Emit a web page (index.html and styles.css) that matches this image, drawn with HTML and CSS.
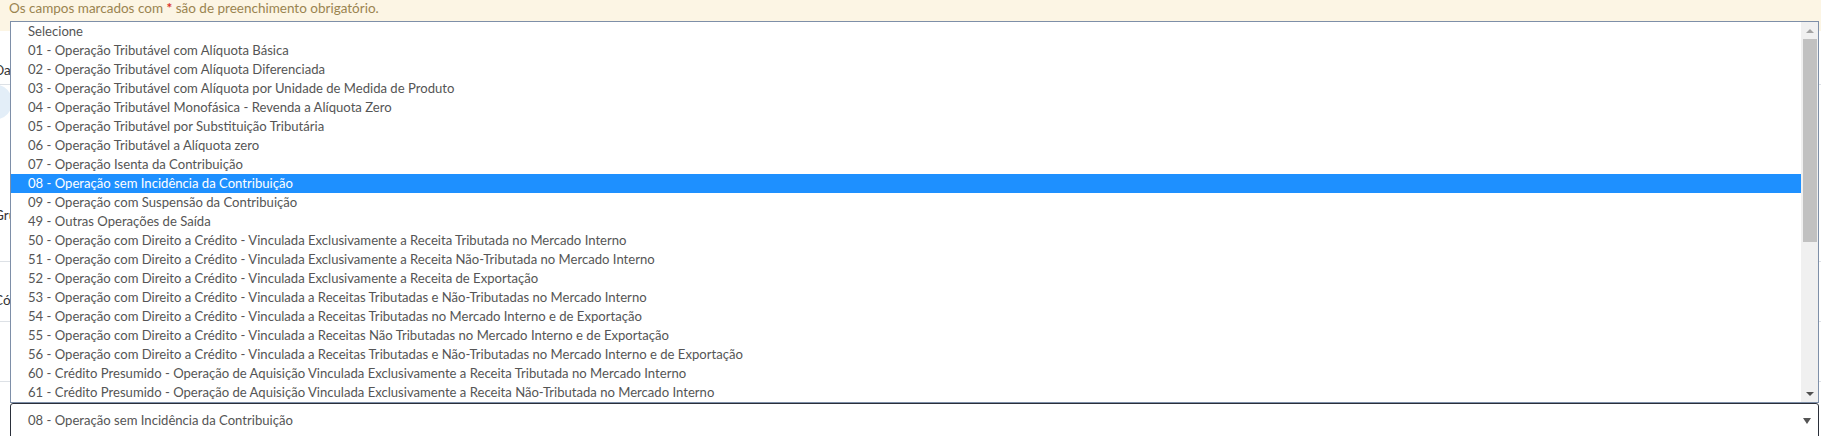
FILE: index.html
```html
<!DOCTYPE html>
<html lang="pt-BR">
<head>
<meta charset="utf-8">
<title>CST</title>
<link rel="stylesheet" href="styles.css">
</head>
<body>
<div class="page">
  <div class="notice">Os campos marcados com <span class="req">*</span> são de preenchimento obrigatório.</div>
  <div class="form">
    <div class="frow r1"><span class="lbl">Data de emissão</span></div>
    <div class="frow r2"><span class="blob"></span></div>
    <div class="frow r3"><span class="lbl">Grupo</span></div>
    <div class="frow r4"><span class="lbl">Código</span></div>
    <div class="frow r5"></div>
  </div>

  <div class="dropdown">
    <div class="listbox">
      <ul class="options">
        <li>Selecione</li>
        <li>01 - Operação Tributável com Alíquota Básica</li>
        <li>02 - Operação Tributável com Alíquota Diferenciada</li>
        <li>03 - Operação Tributável com Alíquota por Unidade de Medida de Produto</li>
        <li>04 - Operação Tributável Monofásica - Revenda a Alíquota Zero</li>
        <li>05 - Operação Tributável por Substituição Tributária</li>
        <li>06 - Operação Tributável a Alíquota zero</li>
        <li>07 - Operação Isenta da Contribuição</li>
        <li class="sel">08 - Operação sem Incidência da Contribuição</li>
        <li>09 - Operação com Suspensão da Contribuição</li>
        <li>49 - Outras Operações de Saída</li>
        <li>50 - Operação com Direito a Crédito - Vinculada Exclusivamente a Receita Tributada no Mercado Interno</li>
        <li>51 - Operação com Direito a Crédito - Vinculada Exclusivamente a Receita Não-Tributada no Mercado Interno</li>
        <li>52 - Operação com Direito a Crédito - Vinculada Exclusivamente a Receita de Exportação</li>
        <li>53 - Operação com Direito a Crédito - Vinculada a Receitas Tributadas e Não-Tributadas no Mercado Interno</li>
        <li>54 - Operação com Direito a Crédito - Vinculada a Receitas Tributadas no Mercado Interno e de Exportação</li>
        <li>55 - Operação com Direito a Crédito - Vinculada a Receitas Não Tributadas no Mercado Interno e de Exportação</li>
        <li>56 - Operação com Direito a Crédito - Vinculada a Receitas Tributadas e Não-Tributadas no Mercado Interno e de Exportação</li>
        <li>60 - Crédito Presumido - Operação de Aquisição Vinculada Exclusivamente a Receita Tributada no Mercado Interno</li>
        <li>61 - Crédito Presumido - Operação de Aquisição Vinculada Exclusivamente a Receita Não-Tributada no Mercado Interno</li>
      </ul>
      <div class="scrollbar">
        <span class="arrow up"></span>
        <span class="thumb"></span>
        <span class="track"></span>
        <span class="arrow down"></span>
      </div>
    </div>
    <div class="select">
      <span class="value">08 - Operação sem Incidência da Contribuição</span>
      <span class="caret"></span>
    </div>
  </div>
</div>
</body>
</html>
```

FILE: styles.css
```css
* { box-sizing: border-box; }
html, body { margin: 0; padding: 0; background: #fff; }
body {
  font-family: "Lato", "Liberation Sans", sans-serif;
  font-size: 13.1px;
  color: #555;
  width: 1821px;
  height: 436px;
  overflow: hidden;
}
.page { position: relative; width: 1821px; height: 436px; }

.notice {
  height: 31px;
  background: #fcf5e4;
  color: #9a8450;
  padding: 0 0 0 9px;
  line-height: 16px;
  font-size: 13.5px;
}
.notice .req { color: #d9322b; font-weight: bold; }

.form { display: flex; flex-direction: column; }
.frow { position: relative; border-bottom: 1px solid #dde1e6; color: #333; font-size: 13.5px; }
.frow .lbl { display: block; margin-left: -6px; }
.r1 { height: 54px; padding-top: 31px; }
.r2 { height: 58px; border-bottom: none; }
.r2 .blob { display: block; width: 30px; height: 34px; margin: 0 0 0 -18px; background: #e3eef8; border-radius: 50%; }
.r3 { height: 119px; padding-top: 64px; }
.r4 { height: 60px; padding-top: 30px; }
.r5 { height: 60px; }

.dropdown {
  position: absolute;
  left: 10px;
  top: 21px;
  width: 1809px;
}
.listbox {
  display: flex;
  height: 382px;
  border: 1px solid #7e8fa8;
  background: #fff;
}
.options {
  flex: 1;
  list-style: none;
  margin: 0;
  padding: 0;
}
.options li {
  height: 19px;
  line-height: 19px;
  padding-left: 17px;
  white-space: nowrap;
  color: #555;
}
.options li.sel { background: #1e90ff; color: #fff; }

.scrollbar {
  width: 17px;
  display: flex;
  flex-direction: column;
  align-items: center;
  background: #f0f0f0;
  padding: 0 1px 0 1px;
}
.scrollbar .arrow { width: 100%; height: 17px; display: flex; align-items: center; justify-content: center; }
.scrollbar .arrow::before { content: ""; border-left: 4px solid transparent; border-right: 4px solid transparent; }
.scrollbar .up::before { border-bottom: 4px solid #a3a3a3; }
.scrollbar .down::before { border-top: 4px solid #505050; }
.scrollbar .thumb { width: 14px; height: 203px; background: #c1c1c1; }
.scrollbar .track { flex: 1; }

.select {
  display: flex;
  align-items: center;
  justify-content: space-between;
  height: 36px;
  border: 1px solid #2a2f3a;
  border-radius: 3px;
  background: #fff;
  padding: 0 7px 2px 17px;
  color: #555;
}
.select .caret { width: 0; height: 0; border-left: 4px solid transparent; border-right: 4px solid transparent; border-top: 6px solid #555; margin-top: 2px; }
```
